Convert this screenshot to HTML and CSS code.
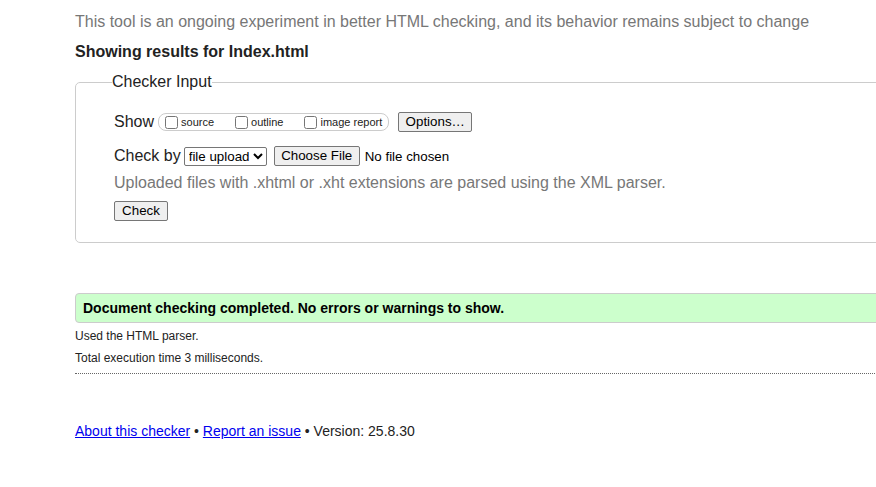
FILE: index.html
```html
<!DOCTYPE html>
<html lang="en">
<head>
<meta charset="utf-8">
<title>Nu Html Checker</title>
<link rel="stylesheet" href="styles.css">
</head>
<body>
<div class="page">
  <p class="intro">This tool is an ongoing experiment in better HTML checking, and its behavior remains subject to change</p>
  <h2 class="results-title">Showing results for Index.html</h2>
  <form class="checker-form">
    <fieldset class="checker-input">
      <legend class="checker-legend">Checker Input</legend>
      <div class="row row-show">
        <span class="row-label">Show</span>
        <span class="show-options">
          <label class="opt"><input type="checkbox" class="cb">source</label>
          <label class="opt"><input type="checkbox" class="cb">outline</label>
          <label class="opt opt-last"><input type="checkbox" class="cb">image report</label>
        </span>
        <button type="button" class="btn btn-options">Options…</button>
      </div>
      <div class="row row-checkby">
        <span class="row-label">Check by</span>
        <select class="select">
          <option>file upload</option>
        </select>
        <span class="file">
          <button type="button" class="btn btn-file">Choose File</button>
          <span class="file-name">No file chosen</span>
        </span>
      </div>
      <p class="hint">Uploaded files with .xhtml or .xht extensions are parsed using the XML parser.</p>
      <div class="row row-submit">
        <button type="button" class="btn btn-check">Check</button>
      </div>
    </fieldset>
  </form>
  <div class="success">Document checking completed. No errors or warnings to show.</div>
  <p class="details">Used the HTML parser.</p>
  <p class="details details-2">Total execution time 3 milliseconds.</p>
  <hr class="dotted">
  <p class="footer"><a href="#">About this checker</a> • <a href="#">Report an issue</a> • Version: 25.8.30</p>
</div>
</body>
</html>
```

FILE: styles.css
```css
html {
  overflow: hidden;
}
body {
  margin: 0;
  font-family: "Liberation Sans", Arial, sans-serif;
  color: #222;
  background: #fff;
}
.page {
  padding-left: 75px;
  width: 1000px;
}
.intro {
  margin: 0;
  padding-top: 12px;
  font-size: 16px;
  line-height: 20px;
  color: #777;
}
.results-title {
  margin: 10px 0 0;
  font-size: 16px;
  line-height: 20px;
  font-weight: bold;
  color: #222;
}
.checker-form {
  margin: 10px 0 0;
}
.checker-input {
  margin: 0;
  border: 1px solid #ccc;
  border-radius: 5px;
  padding: 0 0 21px 38px;
}
.checker-legend {
  margin-left: -2px;
  padding: 0;
  font-size: 16px;
  line-height: 20px;
  color: #222;
}
.row {
  display: flex;
  align-items: center;
}
.row-show {
  margin-top: 19px;
  height: 22px;
}
.row-label {
  font-size: 16px;
  line-height: 20px;
  margin-right: 4px;
}
.show-options {
  display: inline-flex;
  align-items: center;
  height: 16px;
  border: 1px solid #ccc;
  border-radius: 8px;
  padding: 0 6px 0 2px;
  font-size: 11px;
}
.opt {
  display: inline-flex;
  align-items: center;
  margin-right: 17px;
}
.opt-last {
  margin-right: 0;
}
.cb {
  width: 13px;
  height: 13px;
  margin: 0 3px 0 4px;
}
.btn {
  font-family: "Liberation Sans", Arial, sans-serif;
  font-size: 13.33px;
  color: #000;
  background: #efefef;
  border: 1px solid #767676;
  border-radius: 2px;
  height: 20px;
  padding: 0 6px;
  line-height: 16px;
}
.btn-options {
  margin-left: 9px;
  width: 74px;
}
.row-checkby {
  margin-top: 13px;
  height: 20px;
}
.select {
  font-family: "Liberation Sans", Arial, sans-serif;
  font-size: 13.33px;
  height: 19px;
  width: 83px;
  padding: 0;
  margin-left: -1px;
  color: #000;
  border: 1px solid #767676;
  border-radius: 2px;
  background: #fff;
}
.file {
  display: inline-flex;
  align-items: center;
  margin-left: 7px;
  font-size: 13.33px;
  color: #000;
}
.btn-file {
  width: 86px;
  margin-right: 5px;
}
.hint {
  margin: 7px 0 0;
  font-size: 16px;
  line-height: 20px;
  color: #777;
}
.row-submit {
  margin-top: 8px;
}
.btn-check {
  width: 54px;
}
.success {
  margin-top: 50px;
  height: 28px;
  line-height: 28px;
  border: 1px solid #ccc;
  border-radius: 4px;
  background: #ccffcc;
  padding: 0 7px;
  font-size: 14px;
  font-weight: bold;
  color: #000;
}
.details {
  margin: 6px 0 0;
  font-size: 12px;
  line-height: 15px;
}
.details-2 {
  margin-top: 7px;
}
.dotted {
  margin: 7px 0 0;
  border: 0;
  border-top: 1px dotted #666;
  height: 0;
}
.footer {
  margin: 49px 0 0;
  font-size: 14px;
  line-height: 17px;
}
.footer a {
  color: #00e;
}
```
